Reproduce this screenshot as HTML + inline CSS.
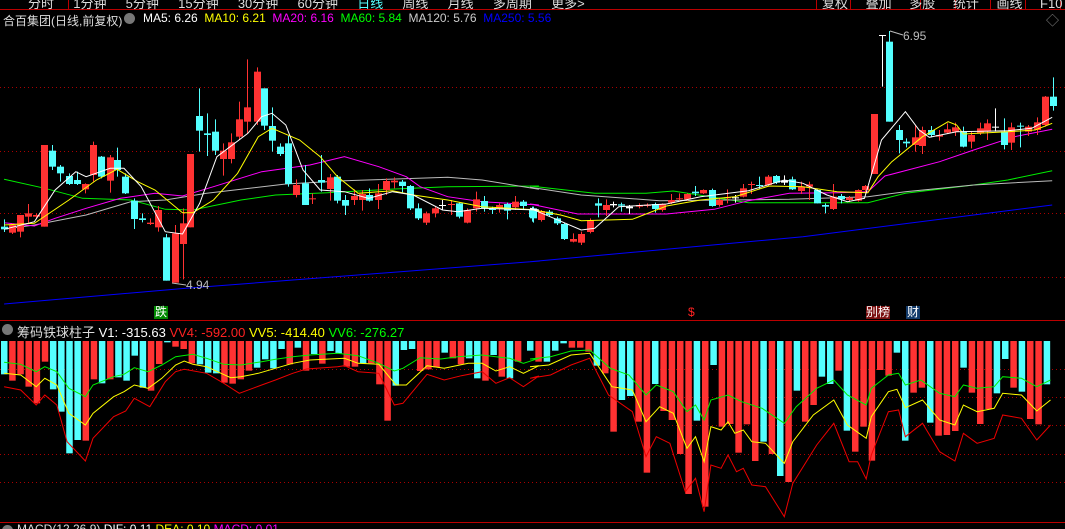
<!DOCTYPE html>
<html><head><meta charset="utf-8"><style>
html,body{margin:0;padding:0;background:#000;width:1065px;height:529px;overflow:hidden}
body{position:relative;font-family:"Liberation Sans","Noto Sans CJK SC",sans-serif;font-size:12px;color:#fff}
.t{position:absolute;white-space:nowrap}
svg{position:absolute;left:0;top:0}
</style></head><body>
<svg id="s" width="1065" height="529" viewBox="0 0 1065 529"></svg>
<div class="t" style="left:28px;top:-7px;color:#ddd;font-size:13px;word-spacing:6px">分时&nbsp; 1分钟&nbsp; 5分钟&nbsp; 15分钟&nbsp; 30分钟&nbsp; 60分钟&nbsp; <span style="color:#5ff">日线</span>&nbsp; 周线&nbsp; 月线&nbsp; 多周期&nbsp; 更多&gt;</div>
<div class="t" style="left:822px;top:-7px;color:#ddd;font-size:13px;word-spacing:14px">复权 叠加 多股 统计 画线 F10 标记</div>
<div class="t" style="left:3px;top:12px;color:#ddd;font-size:12px">合百集团(日线,前复权)</div>
<div class="t" style="left:124px;top:13px;width:11px;height:11px;border-radius:6px;background:#777"></div>
<div class="t" style="left:143px;top:11px;font-size:12px"><span style="color:#fff">MA5: 6.26</span>&nbsp; <span style="color:#ff0">MA10: 6.21</span>&nbsp; <span style="color:#f0f">MA20: 6.16</span>&nbsp; <span style="color:#0f0">MA60: 5.84</span>&nbsp; <span style="color:#ccc">MA120: 5.76</span>&nbsp; <span style="color:#00f">MA250: 5.56</span></div>
<div class="t" style="left:1046px;top:10px;color:#888;font-size:13px">◇</div>
<div class="t" style="left:186px;top:278px;color:#bbb;font-size:12px">4.94</div>
<div class="t" style="left:903px;top:29px;color:#bbb;font-size:12px">6.95</div>
<div class="t" style="left:154px;top:306px;background:#080;color:#fff;font-size:12px;line-height:13px;padding:0 1px">跌</div>
<div class="t" style="left:688px;top:306px;color:#f22;font-size:12px;line-height:13px">$</div>
<div class="t" style="left:866px;top:306px;background:#7a1010;color:#fff;font-size:12px;line-height:13px">别榜</div>
<div class="t" style="left:906px;top:306px;background:#123a6a;color:#fff;font-size:12px;line-height:13px;padding:0 1px">财</div>
<div class="t" style="left:2px;top:324px;width:11px;height:11px;border-radius:6px;background:#777"></div>
<div class="t" style="left:17px;top:322px;font-size:13px;color:#ddd">筹码铁球柱子 <span style="color:#fff">V1: -315.63</span> <span style="color:#f22">VV4: -592.00</span> <span style="color:#ff0">VV5: -414.40</span> <span style="color:#0f0">VV6: -276.27</span></div>
<div class="t" style="left:2px;top:525px;width:11px;height:11px;border-radius:6px;background:#777"></div>
<div class="t" style="left:17px;top:522px;font-size:12px;color:#ddd">MACD(12,26,9) <span style="color:#fff">DIF: 0.11</span> <span style="color:#ff0">DEA: 0.10</span> <span style="color:#f0f">MACD: 0.01</span></div>
<script>
var s=document.getElementById('s'),h='';
var SL=2.904,SR=2.93;
function L(x1,y1,x2,y2,c,w,d){h+='<line x1="'+x1+'" y1="'+y1+'" x2="'+x2+'" y2="'+y2+'" stroke="'+c+'" stroke-width="'+(w||1)+'"'+(d?' stroke-dasharray="'+d+'"':'')+'/>';}
function R(x,y,w,hh,c){h+='<rect x="'+x+'" y="'+y+'" width="'+w+'" height="'+Math.max(hh,1)+'" fill="'+c+'"/>';}
L(0,9.5,1065,9.5,'#b00');L(0,320.5,1065,320.5,'#b00');L(0,522.5,1065,522.5,'#b00');
[816,850,884,920,955,990,1025,1060].forEach(function(x){L(x+.5,0,x+.5,9,'#b00')});
L(68.5,0,68.5,9,'#b00');
[87,151,213,277,369,397,425,454,482].forEach(function(y){L(0,y+.5,1065,y+.5,'#a00',1,'1 3')});
var C='#54ffff',Rd='#ff3232';
var hl=[['c',118],['r',137],['r',118],['r',155],['r',205],['r',80],['c',163],['c',230],['c',355],['c',315],['r',317],['r',133],['c',145],['r',133],['c',127],['c',137],['c',62],['c',158],['r',167],['r',87],['c',22],['r',35],['r',42],['r',85],['c',88],['c',113],['c',115],['r',143],['r',146],['r',133],['r',107],['c',98],['c',73],['c',100],['c',42],['r',88],['c',38],['r',107],['c',57],['r',86],['c',48],['c',55],['r',95],['r',95],['c',85],['r',85],['r',148],['r',257],['c',152],['c',45],['c',42],['r',108],['r',103],['r',97],['c',53],['r',70],['r',88],['c',70],['c',130],['r',137],['c',60],['r',125],['c',130],['r',80]];
var hr=[['c',47],['r',80],['c',80],['c',47],['c',25],['r',38],['r',38],['r',50],['c',92],['r',115],['r',290],['c',195],['c',183],['r',260],['r',413],['c',147],['r',228],['r',255],['r',357],['r',477],['c',257],['r',515],['c',90],['r',275],['r',267],['r',353],['r',268],['r',378],['c',320],['r',357],['c',423],['r',441],['c',167],['r',260],['r',210],['c',125],['c',147],['r',107],['c',287],['r',350],['r',275],['r',377],['r',105],['r',122],['c',53],['c',317],['r',173],['r',158],['c',263],['r',302],['r',300],['r',288],['c',98],['r',173],['r',267],['r',222],['c',175],['c',72],['r',158],['c',170],['r',252],['r',268],['c',148]];
hl.forEach(function(b,i){R(1+i*(522/64),341,6.5,b[1]/3-6,b[0]=='c'?C:Rd)});
hr.forEach(function(b,i){R(527+i*(525/63),341,6.5,b[1]/3-6,b[0]=='c'?C:Rd)});
function P(a,b,c,ox,oy){var p=[];a.forEach(function(q){p.push((q[0]/SL).toFixed(1)+','+(oy+q[1]/3).toFixed(1))});b.forEach(function(q){p.push((530+q[0]/SR).toFixed(1)+','+(oy+q[1]/3).toFixed(1))});h+='<polyline fill="none" stroke="'+c+'" stroke-width="1" points="'+p.join(' ')+'"/>';}
P([[12,82],[60,88],[105,110],[130,95],[165,110],[200,160],[248,185],[270,150],[330,125],[360,118],[390,98],[430,110],[470,90],[510,65],[560,58],[600,70],[650,88],[700,90],[760,80],[800,73],[850,65],[900,60],[980,55],[1040,62],[1100,85],[1145,108],[1170,100],[1220,68],[1280,72],[1330,65],[1400,60],[1440,65],[1480,70],[1520,85],[1565,70]],[[0,72],[60,65],[120,48],[175,45],[235,100],[290,120],[340,180],[370,150],[420,170],[460,230],[485,210],[510,255],[530,195],[580,180],[620,200],[680,220],[745,265],[780,215],[840,160],[890,135],[930,180],[985,210],[1000,160],[1050,120],[1080,115],[1100,150],[1145,135],[1200,175],[1245,185],[1270,150],[1310,160],[1360,155],[1385,125],[1440,130],[1485,155],[1525,135]],'#0e0',0,335);
P([[12,115],[60,120],[105,155],[130,130],[165,150],[200,235],[248,270],[270,235],[330,185],[360,170],[390,150],[430,160],[470,130],[510,90],[535,78],[560,88],[600,95],[670,128],[700,125],[750,115],[800,100],[850,85],[900,75],[1000,70],[1040,85],[1100,88],[1150,150],[1180,150],[1240,92],[1290,100],[1360,85],[1400,85],[1440,108],[1480,95],[1520,115],[1565,92]],[[0,95],[55,90],[120,60],[175,55],[240,155],[300,165],[340,260],[380,215],[420,235],[460,340],[485,305],[510,380],[530,275],[560,285],[580,260],[600,295],[625,285],[650,320],[690,325],[745,385],[770,320],[830,240],[890,195],[930,270],[985,310],[1000,245],[1050,170],[1075,163],[1100,218],[1150,195],[1200,255],[1245,270],[1270,210],[1310,230],[1360,220],[1385,175],[1440,180],[1485,228],[1525,195]],'#ff0',0,335);
P([[12,155],[60,165],[105,210],[130,180],[165,210],[195,320],[248,378],[270,310],[330,245],[365,228],[390,190],[435,215],[480,140],[510,110],[535,103],[600,115],[650,145],[695,175],[760,150],[800,135],[850,115],[890,102],[980,95],[1000,92],[1040,110],[1100,115],[1145,210],[1170,205],[1240,118],[1290,135],[1340,122],[1400,110],[1440,145],[1480,128],[1520,155],[1565,123]],[[0,130],[60,120],[120,90],[175,70],[230,180],[300,230],[340,365],[370,305],[410,325],[455,470],[485,430],[510,530],[530,390],[560,400],[580,360],[605,410],[625,400],[650,450],[690,455],[745,545],[770,445],[840,330],[890,265],[935,380],[960,380],[985,432],[1000,360],[1050,230],[1080,225],[1100,305],[1150,265],[1200,350],[1245,378],[1270,295],[1310,325],[1360,310],[1385,240],[1440,250],[1485,315],[1525,270]],'#e00',0,335);
P([[12,822],[540,775],[1568,693]],[[0,695],[800,620],[1530,525]],'#00f',0,30);
P([[12,448],[130,475],[240,505],[380,510],[480,538],[560,540],[700,510],[800,495],[950,488],[1130,478],[1300,470],[1565,468]],[[0,468],[190,490],[340,490],[420,483],[640,518],[760,518],[990,518],[1100,490],[1300,465],[1400,450],[1530,422]],'#0e0',0,30);
P([[12,598],[100,585],[250,555],[380,515],[480,510],[600,490],[830,462],[1000,452],[1300,442],[1400,450],[1565,478]],[[0,472],[150,495],[380,512],[760,508],[990,500],[1100,485],[1300,465],[1530,452]],'#bbb',0,30);
P([[12,578],[100,588],[160,565],[250,535],[350,505],[450,490],[530,498],[620,470],[760,425],[900,405],[1000,380],[1100,410],[1180,440],[1220,470],[1300,500],[1400,515],[1565,525]],[[0,522],[140,552],[400,552],[540,538],[640,512],[760,490],[900,488],[990,485],[1040,438],[1200,395],[1300,360],[1420,320],[1530,298]],'#f0f',0,30);
var cl=[[12,590,598,568,606,'c'],[35,585,608,580,612,'r'],[58,555,605,555,622,'r'],[82,550,560,522,578,'r'],[104,555,560,550,565,'r'],[128,345,590,345,590,'r'],[152,362,410,345,420,'c'],[175,410,430,405,455,'c'],[200,438,462,430,465,'c'],[224,450,462,425,465,'c'],[246,462,478,460,490,'r'],[270,345,435,335,455,'r'],[294,380,440,378,445,'c'],[318,382,452,375,488,'r'],[340,390,420,353,440,'c'],[364,440,490,430,492,'c'],[390,512,567,505,597,'c'],[413,565,570,550,577,'c'],[436,578,582,565,585,'r'],[460,540,592,528,605,'r'],[483,622,752,612,752,'c'],[507,610,758,585,758,'r'],[530,580,642,535,748,'r'],[553,372,592,372,592,'r'],[578,258,302,175,365,'c'],[602,310,315,250,378,'c'],[625,305,362,268,375,'c'],[648,362,387,340,437,'r'],[672,337,387,310,400,'r'],[695,268,320,215,330,'r'],[718,232,275,88,310,'r'],[745,125,275,112,285,'r'],[768,175,287,175,300,'c'],[790,288,332,232,365,'c'],[813,350,372,340,378,'c'],[837,340,462,318,470,'c'],[860,465,495,448,502,'r'],[885,460,525,405,525,'c'],[907,505,508,490,522,'r'],[933,450,458,375,485,'c'],[957,442,477,432,512,'r'],[980,440,512,435,520,'c'],[1003,510,527,495,555,'c'],[1027,498,510,478,525,'r'],[1050,492,510,480,542,'r'],[1073,495,512,475,515,'c'],[1097,490,510,462,537,'r'],[1120,453,480,445,495,'r'],[1145,452,457,442,475,'r'],[1168,455,468,450,488,'c'],[1192,468,535,465,540,'c'],[1215,535,565,520,570,'c'],[1238,550,578,545,585,'r'],[1262,535,550,530,562,'r'],[1285,525,528,510,540,'w'],[1310,522,525,510,555,'r'],[1333,520,560,518,565,'c'],[1357,540,578,535,580,'r'],[1381,508,535,485,545,'r'],[1405,513,535,498,545,'c'],[1428,535,540,530,552,'c'],[1450,525,535,520,548,'r'],[1473,522,542,518,568,'c'],[1497,515,532,498,540,'r'],[1520,515,528,510,538,'c'],[1545,538,562,530,575,'c']];
var cr=[[8,535,565,530,578,'c'],[32,543,570,540,575,'r'],[55,545,555,540,558,'c'],[78,565,580,560,585,'c'],[100,582,627,578,630,'c'],[125,627,635,610,637,'r'],[150,612,638,605,645,'r'],[175,570,606,565,610,'r'],[198,520,527,505,562,'c'],[222,525,540,508,558,'r'],[244,522,526,515,532,'w'],[268,523,527,518,545,'c'],[290,530,535,525,552,'w'],[318,525,530,520,535,'r'],[342,524,528,520,532,'r'],[365,522,537,518,548,'c'],[388,522,540,520,545,'r'],[412,510,518,492,522,'r'],[436,505,508,490,512,'r'],[459,492,508,490,512,'r'],[482,485,490,468,498,'c'],[508,480,490,478,492,'r'],[532,480,528,476,530,'c'],[555,510,525,505,530,'r'],[578,502,505,478,520,'r'],[602,502,505,495,518,'w'],[625,475,500,462,502,'r'],[648,462,465,455,492,'r'],[672,465,468,440,478,'c'],[698,440,465,435,470,'r'],[722,438,458,435,462,'c'],[745,452,458,436,465,'w'],[769,448,478,440,480,'c'],[793,470,483,455,492,'r'],[817,463,470,455,510,'r'],[840,480,520,478,520,'c'],[864,525,530,520,550,'c'],[888,500,537,462,540,'r'],[912,498,508,492,520,'c'],[936,503,510,498,516,'r'],[960,480,512,478,515,'r'],[983,468,480,465,490,'r'],[1007,252,432,252,432,'r'],[1030,15,18,15,170,'w'],[1053,35,275,3,275,'c'],[1080,300,330,285,370,'c'],[1103,335,340,325,352,'c'],[1127,322,345,285,365,'r'],[1150,300,348,290,372,'r'],[1174,300,315,288,322,'c'],[1198,315,320,300,332,'r'],[1221,298,308,280,312,'r'],[1245,292,305,278,318,'r'],[1270,305,350,290,352,'c'],[1293,315,335,305,355,'r'],[1318,295,310,278,315,'r'],[1340,280,305,268,330,'r'],[1362,290,292,235,305,'w'],[1388,305,345,265,358,'c'],[1410,292,338,278,360,'r'],[1437,287,290,278,352,'c'],[1460,290,305,285,318,'r'],[1485,277,300,262,315,'r'],[1508,200,285,198,290,'r'],[1532,200,228,142,242,'c']];
function K(a,ox,sc){a.forEach(function(k){var x=Math.round(ox+k[0]/sc),col=k[5]=='c'?C:(k[5]=='w'?'#fff':Rd);L(x+.5,30+k[3]/3,x+.5,30+k[4]/3,col);R(x-3,30+k[1]/3,7,(k[2]-k[1])/3,col);});}
K(cl,0,SL);K(cr,530,SR);
P([[12,585],[100,580],[200,510],[280,450],[340,418],[400,455],[450,480],[530,548],[560,548],[620,510],[690,430],[750,320],[790,295],[870,330],[930,380],[980,440],[1040,490],[1140,482],[1200,495],[1300,510],[1400,530],[1565,540]],[[0,538],[90,555],[150,572],[300,568],[400,528],[500,510],[600,500],[700,468],[800,470],[900,485],[990,488],[1020,440],[1060,395],[1150,320],[1225,275],[1250,285],[1270,312],[1400,305],[1480,300],[1530,280]],'#ff0',0,30);
P([[12,598],[100,575],[160,480],[220,425],[250,440],[320,415],[360,415],[410,470],[480,605],[530,612],[580,520],[630,380],[720,310],[760,260],[790,250],[830,285],[880,420],[930,480],[1000,485],[1070,505],[1140,485],[1200,495],[1285,540],[1330,545],[1400,535],[1565,540]],[[0,535],[70,565],[150,600],[190,595],[260,530],[400,522],[500,500],[640,482],[745,450],[800,460],[870,495],[930,515],[980,505],[1030,330],[1100,245],[1140,300],[1170,322],[1250,305],[1400,302],[1470,295],[1530,262]],'#fff',0,30);
L(172,283,186,285,'#bbb');L(890,31,903,35,'#bbb');
s.innerHTML=h;
</script>
</body></html>
